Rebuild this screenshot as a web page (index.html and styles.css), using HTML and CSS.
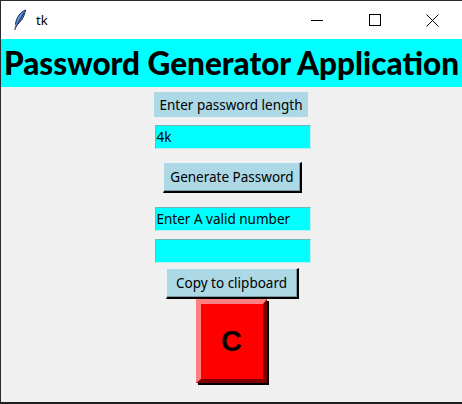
FILE: index.html
```html
<!DOCTYPE html>
<html>
<head>
<meta charset="utf-8">
<link rel="stylesheet" href="styles.css">
</head>
<body>
<div class="window">
  <div class="titlebar">
    <div class="title-left">
      <svg class="feather" width="14" height="22" viewBox="0 0 14 22">
        <path d="M12.5 1 C7 3 3 9 2.5 15.5 L3.5 16.5 C7.5 13 11.5 8 12.5 1 Z" fill="#5a8ee0" stroke="#1e2a44" stroke-width="1"/>
        <path d="M11 3.5 L3 18" stroke="#22304f" stroke-width="1"/>
        <path d="M3 16.5 L1.8 21" stroke="#555" stroke-width="1.3"/>
      </svg>
      <span class="title-text">tk</span>
    </div>
    <div class="controls">
      <svg class="ctl" width="58" height="30" viewBox="0 0 58 30"><path d="M23 15.5 H35" stroke="#000" stroke-width="1"/></svg>
      <svg class="ctl" width="58" height="30" viewBox="0 0 58 30"><rect x="23.5" y="9.5" width="11" height="11" fill="none" stroke="#000" stroke-width="1"/></svg>
      <svg class="ctl" width="58" height="30" viewBox="0 0 58 30"><path d="M22.5 9.5 L34.5 21.5 M34.5 9.5 L22.5 21.5" stroke="#000" stroke-width="1"/></svg>
    </div>
  </div>
  <div class="header">Password Generator Application</div>
  <div class="content">
    <div class="label">Enter password length</div>
    <div class="entry entry-first">4k</div>
    <div class="button btn-generate">Generate Password</div>
    <div class="entry entry-msg">Enter A valid number</div>
    <div class="entry entry-out"></div>
    <div class="button btn-copy">Copy to clipboard</div>
    <div class="cbtn">C</div>
  </div>
</div>
</body>
</html>
```
FILE: styles.css
```css
html, body {
  margin: 0;
  padding: 0;
  background: #f0f0f0;
}
.window {
  width: 461px;
  height: 401px;
  border-left: 1px solid #2b2b2b;
  border-top: 1px solid #2b2b2b;
  border-bottom: 2px solid #1f1f1f;
  background: #f0f0f0;
  display: flex;
  flex-direction: column;
  font-family: "Noto Sans", "Open Sans", sans-serif;
}
.titlebar {
  height: 38px;
  background: #ffffff;
  display: flex;
  justify-content: space-between;
  align-items: flex-start;
}
.title-left {
  display: flex;
  align-items: center;
  height: 38px;
  padding-left: 12px;
}
.feather {
  margin-top: -1px;
}
.title-text {
  font-family: "Noto Sans", sans-serif;
  font-size: 13px;
  color: #000;
  margin-left: 9px;
  margin-top: -1px;
}
.controls {
  display: flex;
  padding-top: 4px;
}
.ctl {
  display: block;
}
.header {
  height: 48px;
  background: #00ffff;
  font-family: "Lato", "Noto Sans", sans-serif;
  font-weight: 900;
  font-size: 31.5px;
  color: #000;
  display: flex;
  align-items: center;
  justify-content: center;
  white-space: nowrap;
}
.content {
  display: flex;
  flex-direction: column;
  align-items: center;
  font-size: 13.5px;
  color: #000;
}
.label {
  margin-top: 5px;
  width: 154px;
  height: 25px;
  background: #add8e6;
  display: flex;
  align-items: center;
  justify-content: center;
  margin-right: 1px;
}
.entry {
  box-sizing: border-box;
  width: 156px;
  height: 24px;
  background: #00ffff;
  border: 1px solid #6fb6b6;
  border-right-color: #b8f0f0;
  border-bottom-color: #b8f0f0;
  padding-left: 1px;
  display: flex;
  align-items: center;
  margin-left: 2px;
}
.entry-first {
  margin-top: 8px;
}
.button {
  box-sizing: border-box;
  height: 31px;
  background: #add8e6;
  border-top: 1px solid #e8f4f8;
  border-left: 1px solid #e8f4f8;
  border-right: 2px solid #000;
  border-bottom: 2px solid #000;
  box-shadow: inset -1px -1px 0 #7a9aa6;
  display: flex;
  align-items: center;
  justify-content: center;
}
.btn-generate {
  margin-top: 13px;
  width: 139px;
  margin-left: 2px;
}
.entry-msg {
  margin-top: 14px;
}
.entry-out {
  margin-top: 8px;
}
.btn-copy {
  margin-top: 5px;
  width: 133px;
  margin-left: 1px;
}
.cbtn {
  box-sizing: border-box;
  width: 71px;
  height: 84px;
  margin-right: 1px;
  margin-top: 0;
  background: #ff0000;
  border-top: 5px solid #ff8080;
  border-left: 5px solid #ff8080;
  border-right: 4px solid #800000;
  border-bottom: 4px solid #800000;
  box-shadow: 2px 2px 0 #000;
  font-family: "Liberation Sans", Arial, sans-serif;
  font-weight: bold;
  font-size: 29px;
  display: flex;
  align-items: center;
  justify-content: center;
}
```
